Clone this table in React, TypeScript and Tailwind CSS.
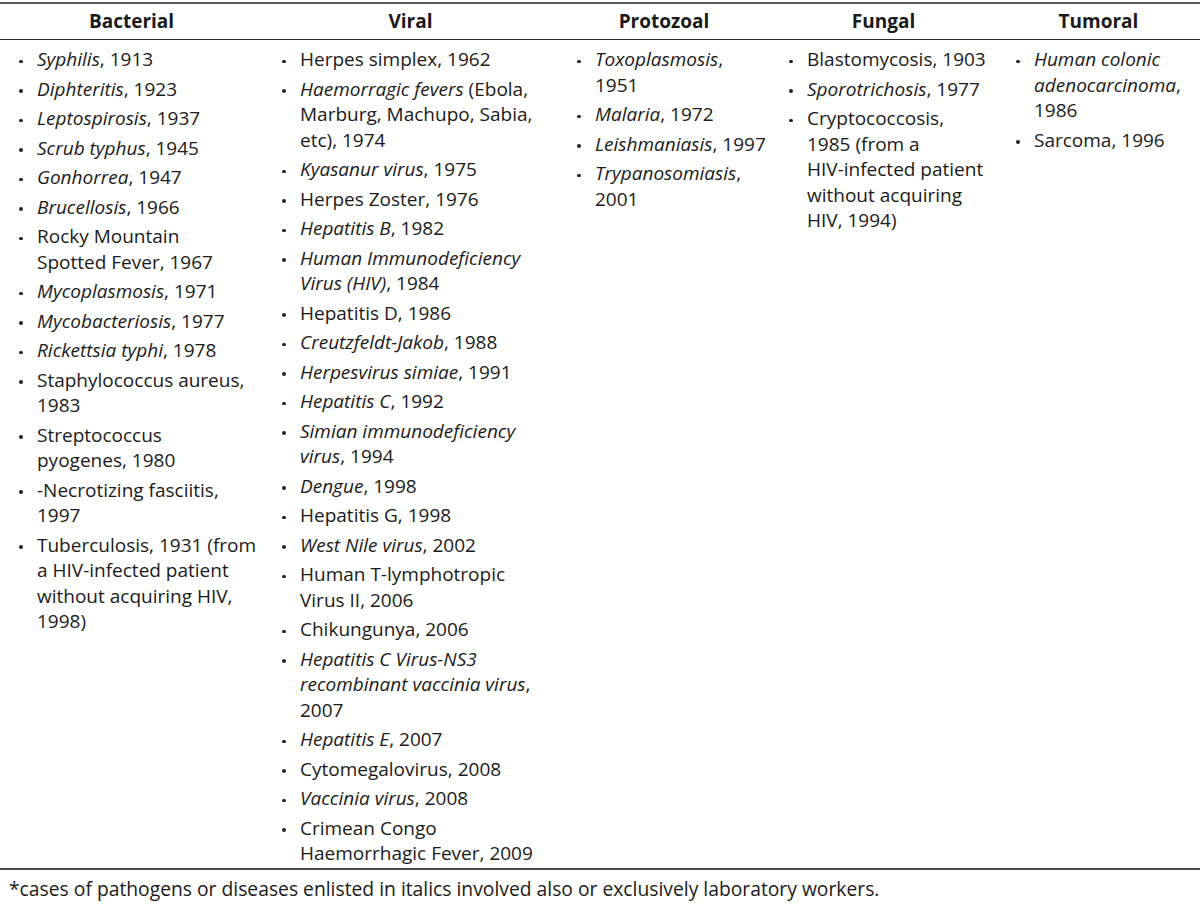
import React from "react";

const Item = ({ children }: { children: React.ReactNode }) => (
  <li className="flex mb-[4px]">
    <span className="w-[37px] shrink-0 h-[25.5px] flex items-center pl-[19px] pt-[3px]">
      <span className="block w-[3.5px] h-[3.5px] rounded-full bg-[#222]" />
    </span>
    <span className="whitespace-nowrap leading-[25.5px]">{children}</span>
  </li>
);

const I = ({ children }: { children: React.ReactNode }) => <i className="italic">{children}</i>;

export default function App() {
  return (
    <div
      className="w-[1200px] h-[915px] bg-white text-[#1a1a1a] overflow-hidden"
      style={{ fontFamily: '"Open Sans", "Noto Sans", sans-serif' }}
    >
      <div className="h-[2px] mt-[2px] bg-[#5a5a5a]" />
      <div className="grid grid-cols-[263px_295px_212px_227px_203px] h-[35px] items-center text-[19px] font-bold text-center">
        <div>Bacterial</div>
        <div>Viral</div>
        <div>Protozoal</div>
        <div>Fungal</div>
        <div>Tumoral</div>
      </div>
      <div className="h-[1px] bg-[#2a2a2a]" />
      <div className="grid grid-cols-[263px_295px_212px_227px_203px] pt-[7px] text-[19px] h-[828px]">
        <ul>
          <Item><I>Syphilis</I>, 1913</Item>
          <Item><I>Diphteritis</I>, 1923</Item>
          <Item><I>Leptospirosis</I>, 1937</Item>
          <Item><I>Scrub typhus</I>, 1945</Item>
          <Item><I>Gonhorrea</I>, 1947</Item>
          <Item><I>Brucellosis</I>, 1966</Item>
          <Item>Rocky Mountain<br />Spotted Fever, 1967</Item>
          <Item><I>Mycoplasmosis</I>, 1971</Item>
          <Item><I>Mycobacteriosis</I>, 1977</Item>
          <Item><I>Rickettsia typhi</I>, 1978</Item>
          <Item>Staphylococcus aureus,<br />1983</Item>
          <Item>Streptococcus<br />pyogenes, 1980</Item>
          <Item>-Necrotizing fasciitis,<br />1997</Item>
          <Item>Tuberculosis, 1931 (from<br />a HIV-infected patient<br />without acquiring HIV,<br />1998)</Item>
        </ul>
        <ul>
          <Item>Herpes simplex, 1962</Item>
          <Item><I>Haemorragic fevers</I> (Ebola,<br />Marburg, Machupo, Sabia,<br />etc), 1974</Item>
          <Item><I>Kyasanur virus</I>, 1975</Item>
          <Item>Herpes Zoster, 1976</Item>
          <Item><I>Hepatitis B</I>, 1982</Item>
          <Item><I>Human Immunodeficiency<br />Virus (HIV)</I>, 1984</Item>
          <Item>Hepatitis D, 1986</Item>
          <Item><I>Creutzfeldt-Jakob</I>, 1988</Item>
          <Item><I>Herpesvirus simiae</I>, 1991</Item>
          <Item><I>Hepatitis C</I>, 1992</Item>
          <Item><I>Simian immunodeficiency<br />virus</I>, 1994</Item>
          <Item><I>Dengue</I>, 1998</Item>
          <Item>Hepatitis G, 1998</Item>
          <Item><I>West Nile virus</I>, 2002</Item>
          <Item>Human T-lymphotropic<br />Virus II, 2006</Item>
          <Item>Chikungunya, 2006</Item>
          <Item><I>Hepatitis C Virus-NS3<br />recombinant vaccinia virus</I>,<br />2007</Item>
          <Item><I>Hepatitis E</I>, 2007</Item>
          <Item>Cytomegalovirus, 2008</Item>
          <Item><I>Vaccinia virus</I>, 2008</Item>
          <Item>Crimean Congo<br />Haemorrhagic Fever, 2009</Item>
        </ul>
        <ul>
          <Item><I>Toxoplasmosis</I>,<br />1951</Item>
          <Item><I>Malaria</I>, 1972</Item>
          <Item><I>Leishmaniasis</I>, 1997</Item>
          <Item><I>Trypanosomiasis</I>,<br />2001</Item>
        </ul>
        <ul>
          <Item>Blastomycosis, 1903</Item>
          <Item><I>Sporotrichosis</I>, 1977</Item>
          <Item>Cryptococcosis,<br />1985 (from a<br />HIV-infected patient<br />without acquiring<br />HIV, 1994)</Item>
        </ul>
        <ul>
          <Item><I>Human colonic<br />adenocarcinoma</I>,<br />1986</Item>
          <Item>Sarcoma, 1996</Item>
        </ul>
      </div>
      <div className="h-[2px] bg-[#4a4a4a]" />
      <div className="pl-[9px] pt-[6px] text-[19.3px] leading-[25px] whitespace-nowrap">
        *cases of pathogens or diseases enlisted in italics involved also or exclusively laboratory workers.
      </div>
    </div>
  );
}
